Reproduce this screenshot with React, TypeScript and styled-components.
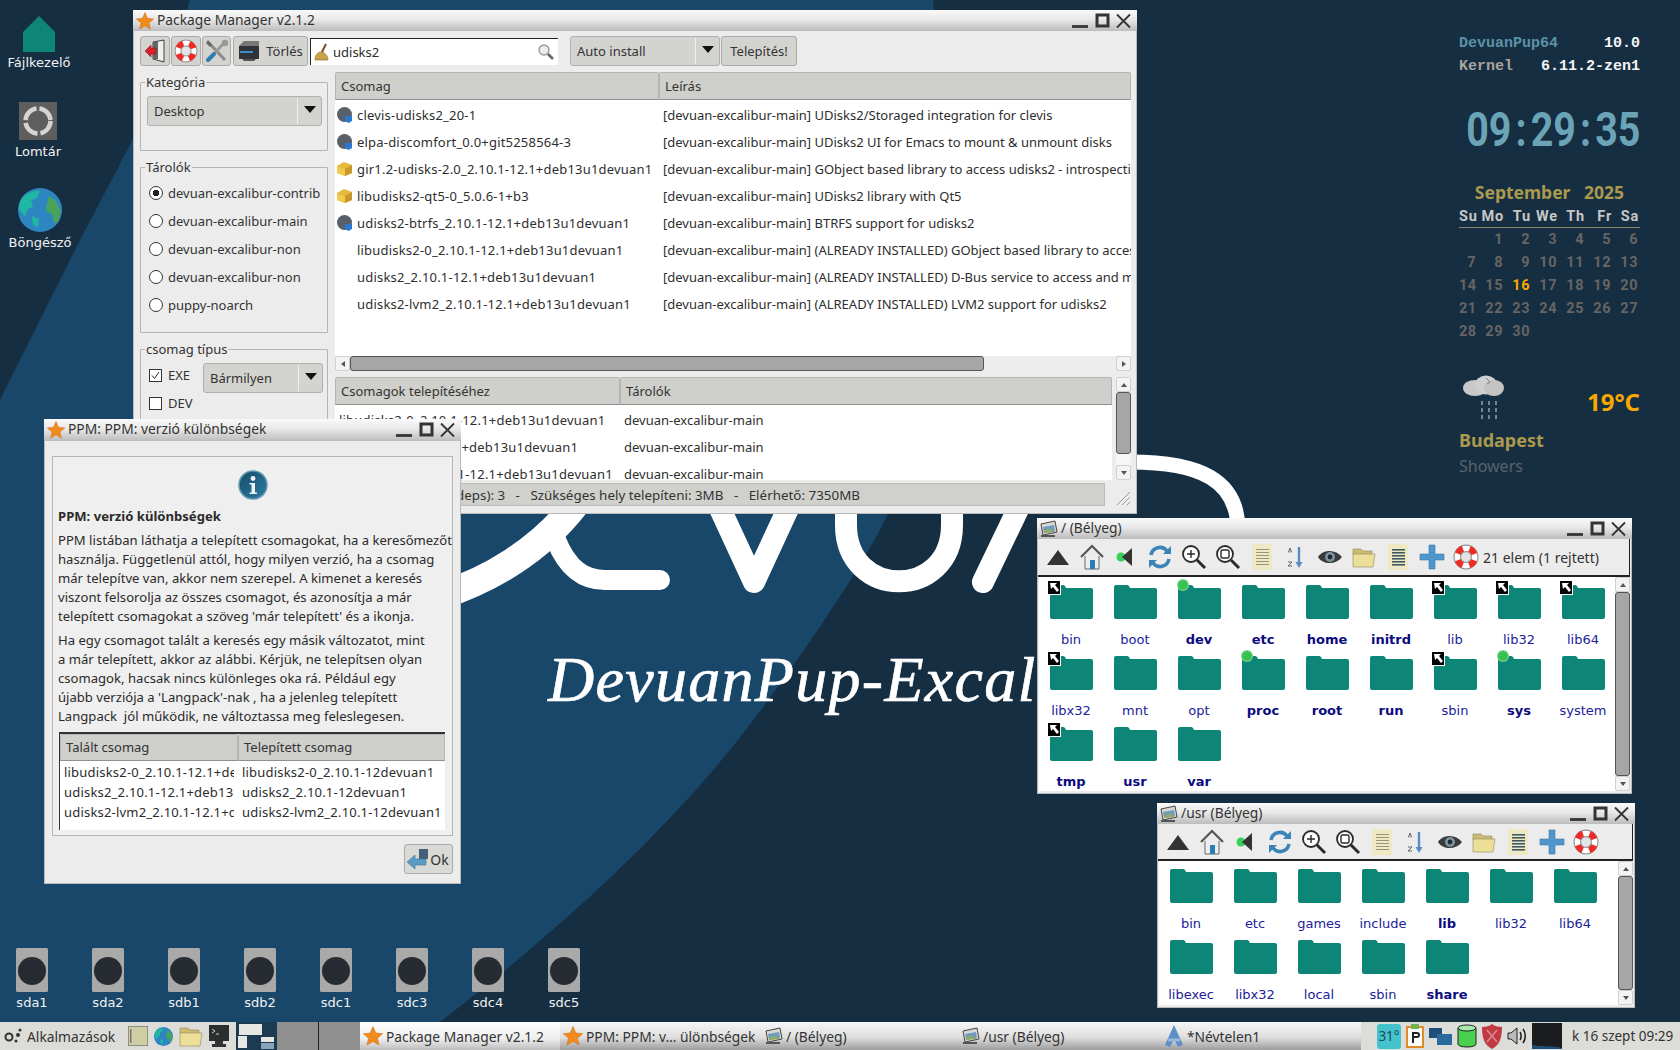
import React from "react";
import styled, { createGlobalStyle } from "styled-components";

const GlobalStyle = createGlobalStyle`
  html, body {
    margin: 0;
    padding: 0;
    height: 100%;
    overflow: hidden;
    background: #19476a;
    font-family: "Noto Sans", sans-serif;
    color: #2b2b2b;
  }
  * { box-sizing: border-box; }
`;

/* ---------- desktop ---------- */

const Desktop = styled.div`
  width: 1680px;
  height: 1050px;
  display: flex;
  flex-direction: column;
  overflow: hidden;
`;

const Workspace = styled.div`
  position: relative;
  flex: 1;
  overflow: hidden;
`;

const WallpaperArt = styled.svg`
  position: absolute;
  left: 0;
  top: 0;
`;

const WallpaperTitle = styled.div`
  position: absolute;
  left: 548px;
  top: 642px;
  font-family: "Liberation Serif", serif;
  font-style: italic;
  font-size: 64px;
  line-height: 76px;
  letter-spacing: 1.3px;
  color: #fff;
  -webkit-text-stroke: 0.7px #fff;
  white-space: nowrap;
`;

const DesktopIcon = styled.div<{ $x: number; $y: number; $gap: number }>`
  position: absolute;
  left: ${(p) => p.$x}px;
  top: ${(p) => p.$y}px;
  width: 80px;
  display: flex;
  flex-direction: column;
  align-items: center;
  gap: ${(p) => p.$gap}px;
`;

const DesktopLabel = styled.span`
  font-family: "DejaVu Sans", sans-serif;
  font-size: 13px;
  line-height: 18px;
  color: #f2f2f2;
  white-space: nowrap;
`;

const DriveRow = styled.div`
  position: absolute;
  left: -6px;
  top: 948px;
  display: flex;
  gap: 0;
`;

const Drive = styled.div`
  width: 76px;
  display: flex;
  flex-direction: column;
  align-items: center;
  gap: 2px;
`;

/* ---------- window chrome ---------- */

const Win = styled.section<{ $x: number; $y: number; $w: number; $h: number }>`
  position: absolute;
  left: ${(p) => p.$x}px;
  top: ${(p) => p.$y}px;
  width: ${(p) => p.$w}px;
  height: ${(p) => p.$h}px;
  display: flex;
  flex-direction: column;
  background: #ececec;
  box-shadow: inset 0 0 0 1px #b9b9b9;
`;

const TitleBar = styled.header<{ $h?: number }>`
  height: ${(p) => p.$h ?? 21}px;
  flex: none;
  display: flex;
  align-items: center;
  gap: 3px;
  padding: 0 5px 0 3px;
  background: linear-gradient(to bottom, #fafafa 0%, #e8e8e8 45%, #bcbcbc 100%);
  font-size: 13.8px;
  color: #333;
  white-space: nowrap;
`;

const TitleText = styled.span`
  flex: 1;
  line-height: 16px;
  padding-bottom: 2px;
`;

/* ---------- package manager ---------- */

const Toolbar = styled.div`
  flex: none;
  display: flex;
  align-items: center;
  height: 30px;
  margin: 5px 0 6px;
  padding-left: 7px;
  gap: 1px;
`;

const ToolButton = styled.button<{ $w: number; $ml?: number }>`
  width: ${(p) => p.$w}px;
  height: 30px;
  margin-left: ${(p) => p.$ml ?? 0}px;
  padding: 0;
  display: flex;
  align-items: center;
  justify-content: center;
  gap: 6px;
  background: #d3d3d0;
  border: 1px solid #aaa;
  border-radius: 3px;
  font: 13px "Noto Sans", sans-serif;
  color: #333;
`;

const SearchBox = styled.div`
  width: 248px;
  height: 27px;
  margin-left: 1px;
  display: flex;
  align-items: center;
  gap: 4px;
  padding: 0 3px 0 3px;
  background: #fff;
  border-top: 1px solid #222;
  border-left: 1px solid #222;
  font-size: 13px;
`;

const SearchText = styled.span`
  flex: 1;
`;

const Combo = styled.div<{ $w?: number; $ml?: number; $mt?: number }>`
  width: ${(p) => (p.$w ? `${p.$w}px` : "100%")};
  height: 30px;
  flex: none;
  margin-left: ${(p) => p.$ml ?? 0}px;
  margin-top: ${(p) => p.$mt ?? 0}px;
  display: flex;
  align-items: center;
  padding-left: 6px;
  background: #d3d3d0;
  border: 1px solid #b0b0b0;
  border-radius: 3px;
  font-size: 13px;
  color: #333;
`;

const ComboText = styled.span`
  flex: 1;
`;

const ComboCaret = styled.span`
  width: 24px;
  height: 26px;
  display: flex;
  align-items: center;
  justify-content: center;
  border-left: 1px solid #efefef;
  &::after {
    content: "";
    border-left: 6px solid transparent;
    border-right: 6px solid transparent;
    border-top: 7px solid #111;
    margin-bottom: 4px;
  }
`;

const PmBody = styled.div`
  flex: 1;
  min-height: 0;
  display: flex;
  padding: 0 6px 8px 7px;
  gap: 7px;
`;

const Sidebar = styled.aside`
  width: 188px;
  flex: none;
  display: flex;
  flex-direction: column;
  gap: 7px;
  margin-top: 1px;
`;

const Frame = styled.fieldset<{ $h?: number; $pt?: number }>`
  margin: 0;
  padding: ${(p) => p.$pt ?? 5}px 5px 0 6px;
  min-width: 0;
  ${(p) => (p.$h ? `height: ${p.$h}px; flex: none;` : "flex: 1;")}
  border: 1px solid #b4b4b4;
  border-radius: 1px;
`;

const FrameLabel = styled.legend`
  padding: 0 1px;
  margin-left: -2px;
  font-size: 13px;
  line-height: 18px;
  color: #333;
`;

const RadioRow = styled.label`
  height: 28px;
  display: flex;
  align-items: center;
  gap: 5px;
  padding-left: 2px;
  font-size: 13px;
  color: #333;
  white-space: nowrap;
`;

const RadioDot = styled.span<{ $on?: boolean }>`
  width: 14px;
  height: 14px;
  flex: none;
  border: 1px solid #333;
  border-radius: 50%;
  background: ${(p) => (p.$on ? "radial-gradient(circle, #222 0 3px, #fff 3.5px)" : "#fff")};
`;

const TypeRow = styled.div`
  display: flex;
  gap: 7px;
`;

const CheckColumn = styled.div`
  width: 49px;
  flex: none;
`;

const CheckRow = styled.label`
  height: 28px;
  display: flex;
  align-items: center;
  gap: 6px;
  padding-left: 2px;
  font-size: 13px;
  color: #333;
`;

const CheckBox = styled.span`
  width: 13px;
  height: 13px;
  flex: none;
  display: flex;
  background: #fff;
  border: 1px solid #333;
`;

const PmMain = styled.div`
  flex: 1;
  min-width: 0;
  display: flex;
  flex-direction: column;
`;

const HeaderRow = styled.div<{ $cols: string; $h?: number }>`
  flex: none;
  display: grid;
  grid-template-columns: ${(p) => p.$cols};
  height: ${(p) => p.$h ?? 28}px;
`;

const HeaderCell = styled.div`
  display: flex;
  align-items: center;
  padding-left: 5px;
  background: #cfcfcc;
  border: 1px solid #b5b5b5;
  border-bottom-color: #8f8f8f;
  border-radius: 2px 2px 0 0;
  font-size: 13px;
  color: #333;
  white-space: nowrap;
  overflow: hidden;
`;

const ListArea = styled.div<{ $h: number }>`
  height: ${(p) => p.$h}px;
  flex: none;
  background: #fff;
  overflow: hidden;
  padding-top: 1px;
`;

const PkgRow = styled.div`
  display: grid;
  grid-template-columns: 323px 1fr;
  height: 27px;
  align-items: center;
  font-size: 13px;
  color: #2e2e2e;
  white-space: nowrap;
`;

const PkgName = styled.div`
  display: flex;
  align-items: center;
  gap: 5px;
  padding-left: 2px;
  letter-spacing: 0.2px;
  overflow: hidden;
`;

const IconSlot = styled.span`
  width: 15px;
  height: 16px;
  flex: none;
  display: flex;
`;

const PkgDesc = styled.div`
  padding-left: 5px;
  overflow: hidden;
`;

const HScroll = styled.div`
  height: 15px;
  flex: none;
  display: flex;
  background: #ededed;
  margin-bottom: 6px;
`;

const ScrollButton = styled.span<{ $dir: "up" | "down" | "left" | "right" }>`
  width: 15px;
  height: 15px;
  flex: none;
  display: flex;
  align-items: center;
  justify-content: center;
  background: #f3f3f3;
  border: 1px solid #d0d0d0;
  border-radius: 2px;
  &::after {
    content: "";
    ${(p) =>
      p.$dir === "up"
        ? "border-left: 3px solid transparent; border-right: 3px solid transparent; border-bottom: 4px solid #555;"
        : p.$dir === "down"
          ? "border-left: 3px solid transparent; border-right: 3px solid transparent; border-top: 4px solid #555;"
          : p.$dir === "left"
            ? "border-top: 3px solid transparent; border-bottom: 3px solid transparent; border-right: 4px solid #555;"
            : "border-top: 3px solid transparent; border-bottom: 3px solid transparent; border-left: 4px solid #555;"}
  }
`;

const HThumb = styled.span`
  width: 634px;
  flex: none;
  background: #a6a6a6;
  border: 1px solid #555;
  border-radius: 3px;
  margin-right: 132px;
`;

const LowerArea = styled.div`
  height: 103px;
  flex: none;
  display: flex;
  gap: 4px;
  margin-bottom: 3px;
`;

const LowerTable = styled.div`
  flex: 1;
  min-width: 0;
  overflow: hidden;
  background: #fff;
`;

const DepList = styled.div`
  padding-top: 1px;
`;

const DepRow = styled.div`
  display: grid;
  grid-template-columns: 285px 1fr;
  height: 27px;
  align-items: center;
  font-size: 13px;
  color: #2e2e2e;
  white-space: nowrap;
`;

const DepCell = styled.div`
  padding-left: 4px;
  letter-spacing: 0.2px;
  overflow: hidden;
`;

const DepRepo = styled.div`
  padding-left: 4px;
  overflow: hidden;
`;

const VScroll = styled.div<{ $w?: number }>`
  width: ${(p) => p.$w ?? 15}px;
  flex: none;
  display: flex;
  flex-direction: column;
  background: #f6f6f6;
`;

const VThumb = styled.span<{ $h?: number; $mt?: number }>`
  ${(p) => (p.$h ? `height: ${p.$h}px;` : "flex: 1;")}
  flex-shrink: 0;
  margin-top: ${(p) => p.$mt ?? 0}px;
  background: #a6a6a6;
  border: 1px solid #555;
  border-radius: 3px;
`;

const VGap = styled.span`
  flex: 1;
`;

const StatusRow = styled.div`
  height: 23px;
  flex: none;
  display: flex;
  align-items: center;
  gap: 7px;
`;

const StatusBar = styled.div`
  width: 770px;
  height: 23px;
  display: flex;
  align-items: center;
  padding-left: 46px;
  background: #d0d0cd;
  border: 1px solid #bcbcbc;
  font-size: 13.4px;
  color: #333;
  white-space: pre;
  overflow: hidden;
`;

const Grip = styled.svg`
  margin-left: auto;
  margin-top: 6px;
`;

/* ---------- message dialog ---------- */

const DialogBody = styled.div`
  flex: 1;
  min-height: 0;
  display: flex;
  flex-direction: column;
  padding: 15px 8px 10px;
`;

const DialogFrame = styled.div`
  height: 380px;
  flex: none;
  display: flex;
  flex-direction: column;
  padding: 13px 5px 0;
  background: #efefef;
  border: 1px solid #b5b5b5;
  font-size: 13.1px;
  line-height: 19px;
  color: #2b2b2b;
`;

const InfoSlot = styled.div`
  display: flex;
  justify-content: center;
  margin-bottom: 7px;
`;

const DialogHeading = styled.strong`
  font-size: 13.1px;
  margin-bottom: 5px;
`;

const Para = styled.p`
  margin: 0 0 5px;
  white-space: nowrap;
`;

const CompareTable = styled.div`
  margin: 1px 0 0 1px;
  height: 98px;
  background: #fff;
  border-top: 2px solid #333;
  border-left: 1px solid #333;
  width: 386px;
`;

const CompareBody = styled.div`
  padding-top: 1px;
`;

const CompareRow = styled.div`
  display: grid;
  grid-template-columns: 178px 1fr;
  height: 20px;
  align-items: center;
  white-space: nowrap;
  font-size: 13px;
  letter-spacing: 0.2px;
`;

const CompareCell = styled.div`
  margin-right: 4px;
  padding-left: 4px;
  overflow: hidden;
`;

const DialogFooter = styled.div`
  display: flex;
  justify-content: flex-end;
  padding-top: 8px;
`;

const OkButton = styled.button`
  width: 49px;
  height: 30px;
  padding: 0 2px 0 0;
  display: flex;
  align-items: center;
  justify-content: center;
  gap: 0;
  background: #d9d9d6;
  border: 1px solid #aaa;
  border-radius: 3px;
  font: 14px "Noto Sans", sans-serif;
  color: #333;
`;

/* ---------- file manager ---------- */

const FmToolbar = styled.div<{ $h: number }>`
  height: ${(p) => p.$h}px;
  flex: none;
  display: flex;
  align-items: center;
  padding-left: 3px;
  margin: 0 2px 0 1px;
  background: #ececec;
  border-right: 1px solid #222;
  border-bottom: 2px solid #222;
  font-size: 14px;
  white-space: nowrap;
`;

const FmTool = styled.span`
  width: 34px;
  height: 30px;
  flex: none;
  display: flex;
  align-items: center;
  justify-content: center;
`;

const FmCount = styled.span`
  margin-left: 0;
  color: #333;
`;

const FmContent = styled.div`
  flex: 1;
  min-height: 0;
  display: flex;
  margin: 0 2px 3px;
  background: #fff;
`;

const FolderGrid = styled.div`
  flex: 1;
  display: grid;
  grid-template-columns: repeat(auto-fill, 64px);
  grid-auto-rows: 71px;
  align-content: start;
`;

const FolderCell = styled.div`
  display: flex;
  flex-direction: column;
  align-items: center;
  padding-top: 8px;
`;

const FolderPic = styled.div`
  position: relative;
  width: 43px;
  height: 34px;
  margin-bottom: 12px;
`;

const LinkBadge = styled.svg`
  position: absolute;
  left: -3px;
  top: -5px;
`;

const MountDot = styled.span`
  position: absolute;
  left: -1px;
  top: -6px;
  width: 12px;
  height: 12px;
  border-radius: 50%;
  background: radial-gradient(circle, #35c24f 0 4px, #8fd79a 6px);
`;

const FolderLabel = styled.span<{ $bold?: boolean }>`
  font-family: "DejaVu Sans", sans-serif;
  font-size: 13px;
  line-height: 17px;
  font-weight: ${(p) => (p.$bold ? 700 : 400)};
  color: ${(p) => (p.$bold ? "#0b0b80" : "#21219a")};
  white-space: nowrap;
`;

/* ---------- conky ---------- */

const Conky = styled.aside`
  position: absolute;
  left: 1459px;
  top: 32px;
  width: 181px;
  display: flex;
  flex-direction: column;
`;

const InfoRow = styled.div<{ $tone: string }>`
  display: flex;
  justify-content: space-between;
  height: 23px;
  align-items: center;
  font-family: "Liberation Mono", monospace;
  font-weight: 700;
  font-size: 15px;
  color: ${(p) => p.$tone};
`;

const InfoValue = styled.span`
  color: #f4f4f4;
`;

const ClockText = styled.div`
  margin-top: 28px;
  height: 46px;
  display: flex;
  align-items: center;
  justify-content: flex-end;
  font-family: Roboto, sans-serif;
  font-weight: 700;
  font-size: 48px;
  color: #6ba4b6;
  white-space: nowrap;
`;

const ClockInner = styled.span`
  display: inline-block;
  transform: scaleX(0.82);
  transform-origin: right center;
`;

const ClockColon = styled.span`
  padding: 0 5px;
`;

const MonthTitle = styled.div`
  margin-top: 28px;
  height: 24px;
  text-align: center;
  font-weight: 700;
  font-size: 17.5px;
  line-height: 24px;
  color: #ab9a4e;
  white-space: pre;
`;

const WeekHeader = styled.div`
  margin-top: 4px;
  height: 20px;
  display: grid;
  grid-template-columns: 18px repeat(6, 27px);
  border-bottom: 1px solid #8a8468;
  font-family: Roboto, sans-serif;
  font-weight: 700;
  font-size: 14.5px;
  line-height: 18px;
  letter-spacing: 0.8px;
  color: #c6c6c6;
  text-align: right;
`;

const DayGrid = styled.div`
  display: grid;
  grid-template-columns: 18px repeat(6, 27px);
  grid-auto-rows: 23px;
  font-family: Roboto, sans-serif;
  font-weight: 700;
  font-size: 14.5px;
  line-height: 23px;
  letter-spacing: 0.5px;
  text-align: right;
`;

const DayNum = styled.span<{ $today?: boolean }>`
  color: ${(p) => (p.$today ? "#f8a800" : "#676462")};
  padding-right: 1px;
`;

const WeatherRow = styled.div`
  margin-top: 33px;
  height: 44px;
  display: flex;
  align-items: center;
  justify-content: space-between;
  padding-left: 3px;
`;

const Temperature = styled.span`
  padding-top: 6px;
  font-weight: 700;
  font-size: 24px;
  color: #f8a800;
`;

const CityName = styled.div`
  margin-top: 7px;
  font-weight: 700;
  font-size: 18px;
  line-height: 26px;
  color: #ab9a4e;
`;

const WeatherNote = styled.div`
  margin-top: 2px;
  font-size: 16px;
  line-height: 22px;
  color: #58636c;
`;

/* ---------- taskbar ---------- */

const Taskbar = styled.footer`
  height: 28px;
  flex: none;
  display: flex;
  align-items: stretch;
  background: #dcdcd8;
  font-size: 13.8px;
  color: #333;
  white-space: nowrap;
`;

const MenuButton = styled.div`
  width: 126px;
  flex: none;
  display: flex;
  align-items: center;
  gap: 4px;
  padding-left: 3px;
`;

const QuickLaunch = styled.div`
  width: 110px;
  flex: none;
  display: flex;
  align-items: center;
  gap: 6px;
  padding-left: 2px;
`;

const Pager = styled.div`
  width: 41px;
  flex: none;
  background: #1c3a52;
`;

const TaskGap = styled.div`
  width: 83px;
  flex: none;
  display: flex;
  justify-content: center;
  background: #8f8f8f;
  &::after {
    content: "";
    width: 1px;
    background: #222;
  }
`;

const TaskButton = styled.div<{ $w: number; $active?: boolean }>`
  width: ${(p) => p.$w}px;
  flex: none;
  display: flex;
  align-items: center;
  gap: 3px;
  padding-left: 3px;
  overflow: hidden;
  background: ${(p) =>
    p.$active
      ? "linear-gradient(to bottom, #fff 0%, #eee 60%, #bdbdbd 100%)"
      : "linear-gradient(to bottom, #f7f7f7 0%, #dedede 55%, #9d9d9d 100%)"};
`;

const Tray = styled.div`
  flex: 1;
  display: flex;
  align-items: center;
  padding-left: 16px;
  gap: 5px;
`;

const ClockLabel = styled.span`
  margin-left: 5px;
  font-size: 13.5px;
`;

/* ---------- drawings ---------- */

const Star = ({ size = 18 }: { size?: number }) => (
  <svg width={size} height={size} viewBox="0 0 18 18">
    <path d="M9 .5l2.5 5.8 6.2.6-4.7 4.1 1.4 6.1L9 13.9l-5.4 3.2L5 11 .3 6.9l6.2-.6z" fill="#f38a1c" stroke="#c9701a" strokeWidth=".5" />
  </svg>
);

const WindowControls = () => (
  <svg width="60" height="16" viewBox="0 0 60 16" fill="none" stroke="#343434">
    <path d="M0 13.5h16" strokeWidth="2.8" />
    <rect x="25" y="2" width="11" height="11" strokeWidth="3" />
    <path d="M45 1.5l13 13M58 1.5l-13 13" strokeWidth="1.8" />
  </svg>
);

const ExitIcon = () => (
  <svg width="24" height="24" viewBox="0 0 24 24">
    <path d="M10 3l11-2v22l-11-3z" fill="#e8e8e8" stroke="#444" />
    <path d="M10 3h10v17H10z" fill="#666" />
    <path d="M15 3h5v17h-5z" fill="#efefef" />
    <path d="M2 12l6-6v3h5v6H8v3z" fill="#d8232f" stroke="#8e1720" strokeWidth=".6" />
  </svg>
);

const Lifebuoy = ({ size = 24 }: { size?: number }) => (
  <svg width={size} height={size} viewBox="0 0 24 24" fill="none">
    <circle cx="12" cy="12" r="11" fill="#fff" stroke="#8f8f8f" />
    <circle cx="12" cy="12" r="8" stroke="#ee2b24" strokeWidth="6" strokeDasharray="6.500 6.070" strokeDashoffset="-3" />
    <circle cx="12" cy="12" r="5" fill="#e4e4e4" stroke="#8f8f8f" />
  </svg>
);

const ToolsIcon = () => (
  <svg width="24" height="24" viewBox="0 0 24 24" fill="none">
    <path d="M4 4l16 17" stroke="#8b8b8b" strokeWidth="3" />
    <path d="M3 1l4 5-2 2-4-4z" fill="#666" />
    <path d="M20 3L7 17" stroke="#9a9a9a" strokeWidth="3" />
    <path d="M9 15l-6 6" stroke="#2f7ea8" strokeWidth="4" strokeLinecap="round" />
    <circle cx="20" cy="4" r="3.2" fill="#999" />
  </svg>
);

const ClearIcon = () => (
  <svg width="22" height="22" viewBox="0 0 22 22">
    <path d="M1 6l5-5h15v5z" fill="#777" />
    <rect x="1" y="6" width="20" height="13" fill="#2f3338" />
    <rect x="2" y="11" width="13" height="2" fill="#3d8fc8" />
    <path d="M4 19h14l-2 2H6z" fill="#555" />
  </svg>
);

const BroomIcon = () => (
  <svg width="15" height="18" viewBox="0 0 15 18">
    <path d="M1 17c0-5 3-8 6-8s7 3 7 8z" fill="#c9a24a" stroke="#8a6a23" strokeWidth=".6" />
    <path d="M8 9l4-8" stroke="#7a4a20" strokeWidth="2" />
  </svg>
);

const MagnifierIcon = () => (
  <svg width="18" height="18" viewBox="0 0 18 18" fill="none">
    <circle cx="7" cy="7" r="5" fill="#e6eef3" stroke="#9a9a9a" strokeWidth="1.4" />
    <path d="M11 11l5 5" stroke="#666" strokeWidth="2.6" />
  </svg>
);

const PackageGlobe = () => (
  <svg width="15" height="16" viewBox="0 0 15 16">
    <circle cx="7.5" cy="7.5" r="7.5" fill="#5a6069" />
    <path d="M8 9h7v5l-3.5 2L8 14z" fill="#2a78d2" />
  </svg>
);

const PackageBox = () => (
  <svg width="15" height="16" viewBox="0 0 15 16">
    <path d="M0 5l7-4 8 3v8l-7 3-8-3z" fill="#e5b93a" />
    <path d="M0 5l8 3 7-4v8l-7 3z" fill="#c9982a" />
    <path d="M0 5l8 3v7l-8-3z" fill="#f0c94f" />
  </svg>
);

const InfoIcon = () => (
  <svg width="30" height="30" viewBox="0 0 30 30">
    <defs>
      <linearGradient id="infoFill" x1="0" y1="0" x2="1" y2="1">
        <stop offset="0" stopColor="#164a68" />
        <stop offset="1" stopColor="#2e7ea2" />
      </linearGradient>
    </defs>
    <circle cx="15" cy="15" r="14" fill="url(#infoFill)" stroke="#5f9ab3" strokeWidth="1.5" />
    <circle cx="15" cy="8.5" r="2.4" fill="#eef3f6" />
    <path d="M11.5 13h5.5v9.5h2V24H11.5v-1.5h2V14.500h-2z" fill="#eef3f6" />
  </svg>
);

const OkArrow = () => (
  <svg width="24" height="24" viewBox="0 0 24 24">
    <rect x="13" y="2" width="9" height="10" fill="#44607a" />
    <path d="M1 15l8-7v4h11v6H9v4z" fill="#5b9cc4" stroke="#3d7397" strokeWidth=".6" />
  </svg>
);

const FolderShape = () => (
  <svg width="43" height="34" viewBox="0 0 43 34">
    <path d="M2 0h11c1 0 2 .6 3 3h25a2 2 0 012 2v27a2 2 0 01-2 2H2a2 2 0 01-2-2V2a2 2 0 012-2z" fill="#0d8577" />
  </svg>
);

const LinkMark = () => (
  <LinkBadge width="14" height="15" viewBox="0 0 14 15">
    <rect x=".5" y=".5" width="13" height="14" fill="#000" stroke="#fff" />
    <path d="M3 3h7l-2 2 4 5-2 2-4-5-2 2z" fill="#fff" />
  </LinkBadge>
);

const FmIconUp = () => (
  <svg width="24" height="18" viewBox="0 0 24 18">
    <path d="M12 2l11 15H1z" fill="#333" />
  </svg>
);
const FmIconHome = () => (
  <svg width="24" height="26" viewBox="0 0 24 26">
    <path d="M5 12v13h14V12" fill="#eee" stroke="#666" />
    <path d="M1 13L12 2l11 11" fill="none" stroke="#555" strokeWidth="2.2" />
    <rect x="10" y="16" width="5" height="9" fill="#2b7db5" />
  </svg>
);
const FmIconBack = () => (
  <svg width="20" height="24" viewBox="0 0 20 24">
    <circle cx="5" cy="12" r="4.5" fill="#37d058" />
    <path d="M16 3v18L6 12z" fill="#333" />
  </svg>
);
const FmIconRefresh = () => (
  <svg width="26" height="26" viewBox="0 0 26 26" fill="none" stroke="#3b84b8" strokeWidth="3.6">
    <path d="M4 11a9 9 0 0116-4" />
    <path d="M22 15a9 9 0 01-16 4" />
    <path d="M24 2v8h-8z" fill="#3b84b8" stroke="none" />
    <path d="M2 24v-8h8z" fill="#3b84b8" stroke="none" />
  </svg>
);
const FmIconZoomIn = () => (
  <svg width="26" height="26" viewBox="0 0 26 26" fill="none" stroke="#2b2b2b">
    <circle cx="10" cy="10" r="8" fill="#fff" strokeWidth="1.8" />
    <path d="M16 16l8 8" strokeWidth="3" />
    <path d="M6 10h8M10 6v8" strokeWidth="1.4" />
  </svg>
);
const FmIconZoomFit = () => (
  <svg width="26" height="26" viewBox="0 0 26 26" fill="none" stroke="#2b2b2b">
    <circle cx="10" cy="10" r="8" fill="#fff" strokeWidth="1.8" />
    <path d="M16 16l8 8" strokeWidth="3" />
    <rect x="6" y="6" width="8" height="8" rx="1.500" strokeWidth="1.4" />
  </svg>
);
const FmIconList = ({ dark }: { dark?: boolean }) => (
  <svg width="20" height="26" viewBox="0 0 20 26">
    <rect width="20" height="26" fill="#eee9c4" />
    {[5, 8, 11, 14, 17, 20].map((y) => (
      <rect key={y} x="4" y={y} width="13" height={dark ? 1.6 : 1} fill={dark ? "#3f5a62" : "#98957a"} />
    ))}
  </svg>
);
const FmIconSort = () => (
  <svg width="18" height="24" viewBox="0 0 18 24">
    <path d="M3 3l-1.500 4h1M3 3l1.500 4h-1" fill="none" stroke="#666" />
    <path d="M1 17h4l-4 4h4" fill="none" stroke="#666" />
    <path d="M12 2v17" stroke="#5b8bc4" strokeWidth="2.400" />
    <path d="M8.500 17h7L12 23z" fill="#5b8bc4" />
  </svg>
);
const FmIconEye = () => (
  <svg width="24" height="18" viewBox="0 0 24 18">
    <path d="M0 9c5-8 18-8 24 0-6 8-19 8-24 0z" fill="#3a3a3a" />
    <circle cx="12" cy="9" r="5" fill="#7d95a3" />
    <circle cx="12" cy="9" r="2.400" fill="#1c2a33" />
  </svg>
);
const FmIconFolder = () => (
  <svg width="24" height="24" viewBox="0 0 24 24">
    <path d="M1 4h8l2 2h9v4H1z" fill="#cdbb72" stroke="#8f8a63" strokeWidth=".6" />
    <path d="M1 22L1 9h22l-2 13z" fill="#ecdf97" stroke="#8f8a63" strokeWidth=".6" />
  </svg>
);
const FmIconPlus = () => (
  <svg width="26" height="26" viewBox="0 0 26 26">
    <path d="M10 1h6v9h9v6h-9v9h-6v-9H1v-6h9z" fill="#4f96cf" stroke="#3a78aa" strokeWidth=".6" />
  </svg>
);

const FileManagerIcon = () => (
  <svg width="18" height="18" viewBox="0 0 18 18">
    <path d="M1 4l14-3 2 11-14 3z" fill="#d8d8d0" stroke="#444" />
    <path d="M3 7l11-2 1 6-11 2z" fill="#6d9cc0" />
    <path d="M4 11l5-3 5 3v1l-10 1z" fill="#8fa86b" />
    <path d="M1 15h14v2H1z" fill="#555" />
  </svg>
);

const TrashRing = () => (
  <svg width="38" height="38" viewBox="0 0 38 38">
    <rect width="38" height="38" fill="#5e5e5e" />
    <circle cx="19" cy="19" r="12.500" fill="none" stroke="#d4d4d4" strokeWidth="4.500" strokeDasharray="17 3" />
  </svg>
);

const HomeShape = () => (
  <svg width="34" height="38" viewBox="0 0 34 38">
    <path d="M17 1l16 16v20H1V17z" fill="#0d8577" />
  </svg>
);

const GlobeIcon = ({ size = 44 }: { size?: number }) => (
  <svg width={size} height={size} viewBox="0 0 44 44">
    <circle cx="22" cy="22" r="22" fill="#2d86bf" />
    <path d="M6 8c6-5 14-6 16-5l-3 7-6 2 2 7-5 2-3 8-6-8C1 16 3 11 6 8z" fill="#1fb7a3" />
    <path d="M31 8l7 5 5 10-3 11-4 1-2-9-6-3 1-7z" fill="#4aa35c" />
    <path d="M14 28l7 3-1 9-5-3z" fill="#1fb7a3" />
  </svg>
);

const DriveIcon = () => (
  <svg width="32" height="44" viewBox="0 0 32 44">
    <rect width="32" height="44" rx="1.500" fill="#a9a9a9" />
    <circle cx="16" cy="23" r="14" fill="#262c31" />
  </svg>
);

const CloudRain = () => (
  <svg width="44" height="46" viewBox="0 0 44 46">
    <ellipse cx="13" cy="13" rx="12" ry="8" fill="#c9c9c9" />
    <ellipse cx="24" cy="10" rx="11" ry="9.500" fill="#cfcfcf" />
    <ellipse cx="32" cy="13" rx="10" ry="8" fill="#c4c4c4" />
    <path d="M24 3l4 4-3 2" stroke="#7d7d7d" fill="none" />
    <g stroke="#d8d8d8" strokeWidth="1" strokeDasharray="4 3">
      <path d="M20 26v18M27 26v18M34 26v18" />
    </g>
  </svg>
);

const MenuIcon = () => (
  <svg width="20" height="18" viewBox="0 0 20 18" fill="none">
    <circle cx="6" cy="10" r="3.500" stroke="#333" strokeWidth="2" />
    <circle cx="15" cy="8" r="2" fill="#333" />
    <circle cx="17" cy="3" r="1.500" fill="#333" />
    <circle cx="13" cy="14" r="1.500" fill="#333" />
  </svg>
);

const NoteIcon = () => (
  <svg width="20" height="20" viewBox="0 0 20 20">
    <rect width="20" height="20" fill="#cfcda4" stroke="#555" />
    <rect x="2" y="3" width="1.500" height="14" fill="#777" />
  </svg>
);

const TermIcon = () => (
  <svg width="20" height="22" viewBox="0 0 20 22">
    <rect width="20" height="16" fill="#2c2f30" />
    <path d="M3 4l3 2-3 2M7 9h3" stroke="#ccc" fill="none" />
    <path d="M6 16h8v3H6zM3 19h14v3H3z" fill="#333" />
  </svg>
);

const PagerArt = () => (
  <svg width="41" height="28" viewBox="0 0 41 28">
    <rect x="3" y="2" width="23" height="11" fill="#e6e6e2" />
    <rect x="2" y="14" width="9" height="12" fill="#e6e6e2" />
    <rect x="25" y="15" width="13" height="5" fill="#e6e6e2" />
    <rect x="25" y="21" width="13" height="6" fill="#8aa4b8" />
  </svg>
);

const NoteTaskIcon = () => (
  <svg width="20" height="24" viewBox="0 0 20 24">
    <path d="M10 1L1 21l5 2 4-8 4 8 5-2z" fill="#5d8fc7" />
    <path d="M4 16h12" stroke="#9ab8de" strokeWidth="3" />
  </svg>
);

const TrayTemp = styled.span`
  width: 24px;
  height: 25px;
  flex: none;
  display: flex;
  align-items: center;
  justify-content: center;
  background: #45c3cc;
  border-radius: 3px;
  font-size: 13.5px;
  color: #184d5c;
`;

const TrayClipboard = () => (
  <svg width="18" height="24" viewBox="0 0 18 24">
    <rect x="1" y="3" width="16" height="20" fill="#fff" stroke="#e08a2a" strokeWidth="2" />
    <rect x="5" y="0" width="8" height="5" fill="#6fb04f" />
    <path d="M6 8h5a3 3 0 010 6H8v5H6zM8 10v2h3a1 1 0 000-2z" fill="#222" />
  </svg>
);

const TrayWindows = () => (
  <svg width="23" height="22" viewBox="0 0 23 22">
    <rect x="0" y="3" width="13" height="10" fill="#1d4f7a" />
    <rect x="8" y="9" width="15" height="11" fill="#2b6a9c" />
  </svg>
);

const TrayDrive = () => (
  <svg width="20" height="24" viewBox="0 0 20 24">
    <path d="M1 4v16c0 4 18 4 18 0V4z" fill="#49d04f" stroke="#222" />
    <ellipse cx="10" cy="4" rx="9" ry="3" fill="#a6ecaa" stroke="#222" />
  </svg>
);

const TrayShield = () => (
  <svg width="20" height="25" viewBox="0 0 20 25">
    <path d="M10 0c2 2 6 3 10 3 0 10-2 18-10 22C2 21 0 13 0 3c4 0 8-1 10-3z" fill="#c03a44" />
    <path d="M5 6l10 12M15 6L5 18" stroke="#dd8a8f" strokeWidth="1.500" />
  </svg>
);

const TraySpeaker = () => (
  <svg width="20" height="20" viewBox="0 0 20 20" fill="none" stroke="#222">
    <path d="M1 7h3l6-5v16l-6-5H1z" fill="#bbb" />
    <path d="M13 6c1.500 2 1.500 6 0 8M16 3c3 4 3 10 0 14" strokeWidth="1.600" />
  </svg>
);

const TrayDesk = () => (
  <svg width="30" height="26" viewBox="0 0 30 26">
    <rect width="30" height="26" fill="#1a1c1e" />
    <path d="M0 26v-4c10 2 18 0 30 3v1z" fill="#1d4f75" />
  </svg>
);

/* ---------- data ---------- */

type PkgIcon = "globe" | "box" | null;

const packages: { name: string; icon: PkgIcon; desc: string }[] = [
  { name: "clevis-udisks2_20-1", icon: "globe", desc: "[devuan-excalibur-main] UDisks2/Storaged integration for clevis" },
  { name: "elpa-discomfort_0.0+git5258564-3", icon: "globe", desc: "[devuan-excalibur-main] UDisks2 UI for Emacs to mount & unmount disks" },
  { name: "gir1.2-udisks-2.0_2.10.1-12.1+deb13u1devuan1", icon: "box", desc: "[devuan-excalibur-main] GObject based library to access udisks2 - introspection data" },
  { name: "libudisks2-qt5-0_5.0.6-1+b3", icon: "box", desc: "[devuan-excalibur-main] UDisks2 library with Qt5" },
  { name: "udisks2-btrfs_2.10.1-12.1+deb13u1devuan1", icon: "globe", desc: "[devuan-excalibur-main] BTRFS support for udisks2" },
  { name: "libudisks2-0_2.10.1-12.1+deb13u1devuan1", icon: null, desc: "[devuan-excalibur-main] (ALREADY INSTALLED) GObject based library to access udisks2" },
  { name: "udisks2_2.10.1-12.1+deb13u1devuan1", icon: null, desc: "[devuan-excalibur-main] (ALREADY INSTALLED) D-Bus service to access and manipulate" },
  { name: "udisks2-lvm2_2.10.1-12.1+deb13u1devuan1", icon: null, desc: "[devuan-excalibur-main] (ALREADY INSTALLED) LVM2 support for udisks2" },
];

const repos = [
  "devuan-excalibur-contrib",
  "devuan-excalibur-main",
  "devuan-excalibur-non",
  "devuan-excalibur-non",
  "puppy-noarch",
];

const deps = [
  "libudisks2-0_2.10.1-12.1+deb13u1devuan1",
  "udisks2_2.10.1-12.1+deb13u1devuan1",
  "udisks2-lvm2_2.10.1-12.1+deb13u1devuan1",
];

const compareRows = [
  ["libudisks2-0_2.10.1-12.1+deb13u1devuan1", "libudisks2-0_2.10.1-12devuan1"],
  ["udisks2_2.10.1-12.1+deb13u1devuan1", "udisks2_2.10.1-12devuan1"],
  ["udisks2-lvm2_2.10.1-12.1+deb13u1devuan1", "udisks2-lvm2_2.10.1-12devuan1"],
];

type Entry = { name: string; bold?: boolean; mark?: "link" | "mount" };

const rootEntries: Entry[] = [
  { name: "bin", mark: "link" },
  { name: "boot" },
  { name: "dev", bold: true, mark: "mount" },
  { name: "etc", bold: true },
  { name: "home", bold: true },
  { name: "initrd", bold: true },
  { name: "lib", mark: "link" },
  { name: "lib32", mark: "link" },
  { name: "lib64", mark: "link" },
  { name: "libx32", mark: "link" },
  { name: "mnt" },
  { name: "opt" },
  { name: "proc", bold: true, mark: "mount" },
  { name: "root", bold: true },
  { name: "run", bold: true },
  { name: "sbin", mark: "link" },
  { name: "sys", bold: true, mark: "mount" },
  { name: "system" },
  { name: "tmp", bold: true, mark: "link" },
  { name: "usr", bold: true },
  { name: "var", bold: true },
];

const usrEntries: Entry[] = [
  { name: "bin" },
  { name: "etc" },
  { name: "games" },
  { name: "include" },
  { name: "lib", bold: true },
  { name: "lib32" },
  { name: "lib64" },
  { name: "libexec" },
  { name: "libx32" },
  { name: "local" },
  { name: "sbin" },
  { name: "share", bold: true },
];

const weekDays = ["Su", "Mo", "Tu", "We", "Th", "Fr", "Sa"];
const calendarCells = [0, ...Array.from({ length: 30 }, (_, i) => i + 1)];
const driveNames = ["sda1", "sda2", "sdb1", "sdb2", "sdc1", "sdc3", "sdc4", "sdc5"];

/* ---------- pieces ---------- */

const FmTools = ({ withCount }: { withCount?: boolean }) => (
  <>
    <FmTool><FmIconUp /></FmTool>
    <FmTool><FmIconHome /></FmTool>
    <FmTool><FmIconBack /></FmTool>
    <FmTool><FmIconRefresh /></FmTool>
    <FmTool><FmIconZoomIn /></FmTool>
    <FmTool><FmIconZoomFit /></FmTool>
    <FmTool><FmIconList /></FmTool>
    <FmTool><FmIconSort /></FmTool>
    <FmTool><FmIconEye /></FmTool>
    <FmTool><FmIconFolder /></FmTool>
    <FmTool><FmIconList dark /></FmTool>
    <FmTool><FmIconPlus /></FmTool>
    <FmTool><Lifebuoy size={26} /></FmTool>
    {withCount && <FmCount>21 elem (1 rejtett)</FmCount>}
  </>
);

const Folders = ({ entries }: { entries: Entry[] }) => (
  <FolderGrid>
    {entries.map((entry) => (
      <FolderCell key={entry.name}>
        <FolderPic>
          <FolderShape />
          {entry.mark === "link" && <LinkMark />}
          {entry.mark === "mount" && <MountDot />}
        </FolderPic>
        <FolderLabel $bold={entry.bold}>{entry.name}</FolderLabel>
      </FolderCell>
    ))}
  </FolderGrid>
);

const App: React.FC = () => {
  return (
    <Desktop>
      <GlobalStyle />
      <Workspace>
        <WallpaperArt width="1680" height="1022" viewBox="0 0 1680 1022">
          <path d="M0 0H190C165 90 110 180 70 260C45 310 20 360 0 400Z" fill="#162e42" />
          <path d="M933 0C950 200 940 400 885 520C860 570 800 660 738 740C650 850 540 945 440 1022H1680V0Z" fill="#162e42" />
          <g fill="none" stroke="#fff" strokeWidth="22" strokeLinecap="round" strokeLinejoin="round">
            <path d="M440 596C490 580 540 550 575 505" strokeWidth="28" />
            <path d="M556 540C568 570 585 580 605 580H660" strokeWidth="20" />
            <path d="M716 500L754 582L792 500" />
            <path d="M846 500V525C846 600 952 600 952 525V500" />
            <path d="M983 582L1032 480" />
            <path d="M1130 462C1200 462 1238 480 1238 530" strokeWidth="15" />
          </g>
        </WallpaperArt>
        <WallpaperTitle>DevuanPup-Excal</WallpaperTitle>

        <DesktopIcon $x={-1} $y={15} $gap={1}>
          <HomeShape />
          <DesktopLabel>Fájlkezelő</DesktopLabel>
        </DesktopIcon>
        <DesktopIcon $x={-2} $y={102} $gap={3}>
          <TrashRing />
          <DesktopLabel>Lomtár</DesktopLabel>
        </DesktopIcon>
        <DesktopIcon $x={0} $y={188} $gap={2}>
          <GlobeIcon />
          <DesktopLabel>Böngésző</DesktopLabel>
        </DesktopIcon>

        <DriveRow>
          {driveNames.map((name) => (
            <Drive key={name}>
              <DriveIcon />
              <DesktopLabel>{name}</DesktopLabel>
            </Drive>
          ))}
        </DriveRow>

        <Conky>
          <InfoRow $tone="#5b92a5">
            <span>DevuanPup64</span>
            <InfoValue>10.0</InfoValue>
          </InfoRow>
          <InfoRow $tone="#a9a49c">
            <span>Kernel</span>
            <InfoValue>6.11.2-zen1</InfoValue>
          </InfoRow>
          <ClockText>
            <ClockInner>
              09<ClockColon>:</ClockColon>29<ClockColon>:</ClockColon>35
            </ClockInner>
          </ClockText>
          <MonthTitle>{"September   2025"}</MonthTitle>
          <WeekHeader>
            {weekDays.map((day) => (
              <span key={day}>{day}</span>
            ))}
          </WeekHeader>
          <DayGrid>
            {calendarCells.map((day) => (
              <DayNum key={day} $today={day === 16}>
                {day > 0 ? day : ""}
              </DayNum>
            ))}
          </DayGrid>
          <WeatherRow>
            <CloudRain />
            <Temperature>19°C</Temperature>
          </WeatherRow>
          <CityName>Budapest</CityName>
          <WeatherNote>Showers</WeatherNote>
        </Conky>

        <Win $x={133} $y={10} $w={1004} $h={504}>
          <TitleBar>
            <Star />
            <TitleText>Package Manager v2.1.2</TitleText>
            <WindowControls />
          </TitleBar>
          <Toolbar>
            <ToolButton $w={30}><ExitIcon /></ToolButton>
            <ToolButton $w={30}><Lifebuoy /></ToolButton>
            <ToolButton $w={29}><ToolsIcon /></ToolButton>
            <ToolButton $w={75} $ml={1}><ClearIcon />Törlés</ToolButton>
            <SearchBox>
              <BroomIcon />
              <SearchText>udisks2</SearchText>
              <MagnifierIcon />
            </SearchBox>
            <Combo $w={150} $ml={11}>
              <ComboText>Auto install</ComboText>
              <ComboCaret />
            </Combo>
            <ToolButton $w={76}>Telepítés!</ToolButton>
          </Toolbar>
          <PmBody>
            <Sidebar>
              <Frame $h={78}>
                <FrameLabel>Kategória</FrameLabel>
                <Combo>
                  <ComboText>Desktop</ComboText>
                  <ComboCaret />
                </Combo>
              </Frame>
              <Frame $h={175} $pt={3}>
                <FrameLabel>Tárolók</FrameLabel>
                {repos.map((repo, i) => (
                  <RadioRow key={`${repo}-${i}`}>
                    <RadioDot $on={i === 0} />
                    {repo}
                  </RadioRow>
                ))}
              </Frame>
              <Frame $pt={3}>
                <FrameLabel>csomag típus</FrameLabel>
                <TypeRow>
                  <CheckColumn>
                    <CheckRow>
                      <CheckBox>
                        <svg width="11" height="11" viewBox="0 0 11 11" fill="none" stroke="#333">
                          <path d="M2 5.500l2.500 3L9 2" />
                        </svg>
                      </CheckBox>
                      EXE
                    </CheckRow>
                    <CheckRow>
                      <CheckBox />
                      DEV
                    </CheckRow>
                  </CheckColumn>
                  <Combo $w={120} $mt={2}>
                    <ComboText>Bármilyen</ComboText>
                    <ComboCaret />
                  </Combo>
                </TypeRow>
              </Frame>
            </Sidebar>
            <PmMain>
              <HeaderRow $cols="324px 1fr">
                <HeaderCell>Csomag</HeaderCell>
                <HeaderCell>Leírás</HeaderCell>
              </HeaderRow>
              <ListArea $h={256}>
                {packages.map((pkg) => (
                  <PkgRow key={pkg.name}>
                    <PkgName>
                      <IconSlot>
                        {pkg.icon === "globe" && <PackageGlobe />}
                        {pkg.icon === "box" && <PackageBox />}
                      </IconSlot>
                      {pkg.name}
                    </PkgName>
                    <PkgDesc>{pkg.desc}</PkgDesc>
                  </PkgRow>
                ))}
              </ListArea>
              <HScroll>
                <ScrollButton $dir="left" />
                <HThumb />
                <ScrollButton $dir="right" />
              </HScroll>
              <LowerArea>
                <LowerTable>
                  <HeaderRow $cols="285px 1fr">
                    <HeaderCell>Csomagok telepítéséhez</HeaderCell>
                    <HeaderCell>Tárolók</HeaderCell>
                  </HeaderRow>
                  <DepList>
                    {deps.map((dep) => (
                      <DepRow key={dep}>
                        <DepCell>{dep}</DepCell>
                        <DepRepo>devuan-excalibur-main</DepRepo>
                      </DepRow>
                    ))}
                  </DepList>
                </LowerTable>
                <VScroll>
                  <ScrollButton $dir="up" />
                  <VThumb $h={62} />
                  <VGap />
                  <ScrollButton $dir="down" />
                </VScroll>
              </LowerArea>
              <StatusRow>
                <StatusBar>{"Csomagok (deps): 3   -   Szükséges hely telepíteni: 3MB   -   Elérhető: 7350MB"}</StatusBar>
                <Grip width="16" height="16" viewBox="0 0 16 16" stroke="#999">
                  <path d="M15 2L2 15M15 7L7 15M15 12l-3 3" />
                </Grip>
              </StatusRow>
            </PmMain>
          </PmBody>
        </Win>

        <Win $x={44} $y={419} $w={417} $h={465}>
          <TitleBar $h={22}>
            <Star />
            <TitleText>PPM: PPM: verzió különbségek</TitleText>
            <WindowControls />
          </TitleBar>
          <DialogBody>
            <DialogFrame>
              <InfoSlot><InfoIcon /></InfoSlot>
              <DialogHeading>PPM: verzió különbségek</DialogHeading>
              <Para>
                PPM listában láthatja a telepített csomagokat, ha a keresőmezőt<br />
                használja. Függetlenül attól, hogy milyen verzió, ha a csomag<br />
                már telepítve van, akkor nem szerepel. A kimenet a keresés<br />
                viszont felsorolja az összes csomagot, és azonosítja a már<br />
                telepített csomagokat a szöveg 'már telepített' és a ikonja.
              </Para>
              <Para>
                Ha egy csomagot talált a keresés egy másik változatot, mint<br />
                a már telepített, akkor az alábbi. Kérjük, ne telepítsen olyan<br />
                csomagok, hacsak nincs különleges oka rá. Például egy<br />
                újabb verziója a 'Langpack'-nak , ha a jelenleg telepített<br />
                Langpack&nbsp; jól működik, ne változtassa meg feleslegesen.
              </Para>
              <CompareTable>
                <HeaderRow $cols="178px 1fr" $h={27}>
                  <HeaderCell>Talált csomag</HeaderCell>
                  <HeaderCell>Telepített csomag</HeaderCell>
                </HeaderRow>
                <CompareBody>
                  {compareRows.map(([found, installed]) => (
                    <CompareRow key={found}>
                      <CompareCell>{found}</CompareCell>
                      <CompareCell>{installed}</CompareCell>
                    </CompareRow>
                  ))}
                </CompareBody>
              </CompareTable>
            </DialogFrame>
            <DialogFooter>
              <OkButton><OkArrow />Ok</OkButton>
            </DialogFooter>
          </DialogBody>
        </Win>

        <Win $x={1037} $y={518} $w={595} $h={276}>
          <TitleBar $h={21}>
            <FileManagerIcon />
            <TitleText>/ (Bélyeg)</TitleText>
            <WindowControls />
          </TitleBar>
          <FmToolbar $h={38}>
            <FmTools withCount />
          </FmToolbar>
          <FmContent>
            <Folders entries={rootEntries} />
            <VScroll>
              <ScrollButton $dir="up" />
              <VThumb />
              <ScrollButton $dir="down" />
            </VScroll>
          </FmContent>
        </Win>

        <Win $x={1157} $y={803} $w={478} $h={205}>
          <TitleBar $h={21}>
            <FileManagerIcon />
            <TitleText>/usr (Bélyeg)</TitleText>
            <WindowControls />
          </TitleBar>
          <FmToolbar $h={37}>
            <FmTools />
          </FmToolbar>
          <FmContent>
            <Folders entries={usrEntries} />
            <VScroll>
              <ScrollButton $dir="up" />
              <VThumb />
              <ScrollButton $dir="down" />
            </VScroll>
          </FmContent>
        </Win>
      </Workspace>

      <Taskbar>
        <MenuButton>
          <MenuIcon />
          Alkalmazások
        </MenuButton>
        <QuickLaunch>
          <NoteIcon />
          <GlobeIcon size={19} />
          <FmIconFolder />
          <TermIcon />
        </QuickLaunch>
        <Pager><PagerArt /></Pager>
        <TaskGap />
        <TaskButton $w={200} $active><Star size={20} />Package Manager v2.1.2</TaskButton>
        <TaskButton $w={202}><Star size={20} />PPM: PPM: v… ülönbségek</TaskButton>
        <TaskButton $w={197}><FileManagerIcon />/ (Bélyeg)</TaskButton>
        <TaskButton $w={202}><FileManagerIcon />/usr (Bélyeg)</TaskButton>
        <TaskButton $w={200}><NoteTaskIcon />*Névtelen1</TaskButton>
        <Tray>
          <TrayTemp>31°</TrayTemp>
          <TrayClipboard />
          <TrayWindows />
          <TrayDrive />
          <TrayShield />
          <TraySpeaker />
          <TrayDesk />
          <ClockLabel>k 16 szept 09:29</ClockLabel>
        </Tray>
      </Taskbar>
    </Desktop>
  );
};

export default App;
